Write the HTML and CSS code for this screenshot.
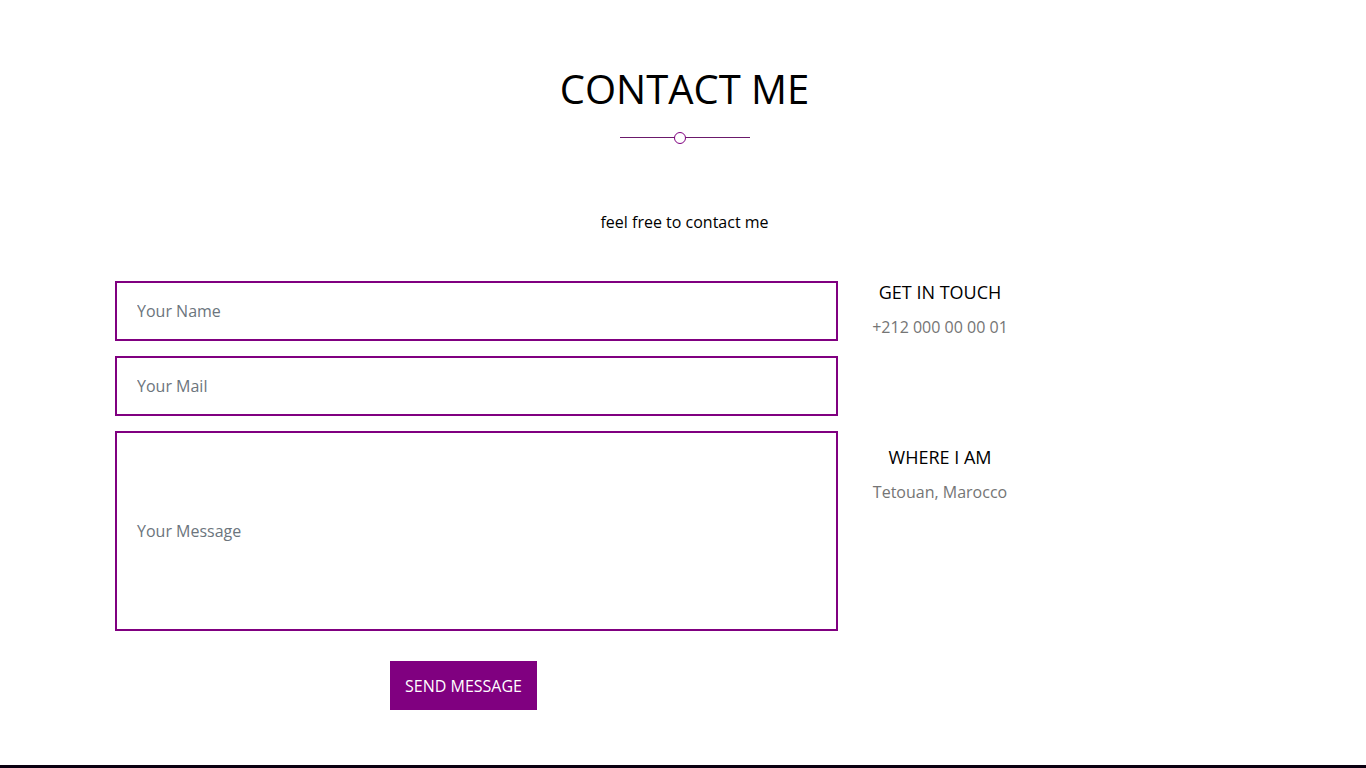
FILE: index.html
```html
<!DOCTYPE html>
<html lang="en">
<head>
<meta charset="utf-8">
<title>Contact Me</title>
<link rel="stylesheet" href="styles.css">
</head>
<body>
<section class="contact">
  <h2 class="contact-title">CONTACT ME</h2>
  <div class="divider"><span class="divider-dot"></span></div>
  <p class="contact-lead">feel free to contact me</p>
  <div class="contact-row">
    <form class="contact-form">
      <input class="field" type="text" placeholder="Your Name">
      <input class="field" type="email" placeholder="Your Mail">
      <textarea class="field field-message" placeholder="Your Message"></textarea>
      <button class="send-btn" type="button">SEND MESSAGE</button>
    </form>
    <div class="contact-info">
      <div class="info-block">
        <h3 class="info-title">GET IN TOUCH</h3>
        <p class="info-text">+212 000 00 00 01</p>
      </div>
      <div class="info-block">
        <h3 class="info-title">WHERE I AM</h3>
        <p class="info-text">Tetouan, Marocco</p>
      </div>
    </div>
  </div>
</section>
<footer class="footer"></footer>
</body>
</html>
```

FILE: styles.css
```css
html {
  overflow-y: scroll;
}

html::-webkit-scrollbar {
  width: 17px;
  background: #f1f1f1;
}

html::-webkit-scrollbar-thumb {
  background: #c1c1c1;
}

body {
  margin: 0;
  font-family: "Open Sans", "Noto Sans", sans-serif;
  color: #000;
  background: #fff;
}

.contact {
  width: 1139px;
  padding: 64px 0 55px 115px;
  text-align: center;
}

.contact-title {
  margin: 0;
  font-size: 40px;
  line-height: 50px;
  font-weight: 400;
}

.divider {
  position: relative;
  width: 130px;
  height: 12px;
  margin: 18px auto 0;
}

.divider::before {
  content: "";
  display: block;
  position: relative;
  top: 5px;
  height: 1px;
  background: #6b1a6b;
}

.divider-dot {
  position: absolute;
  left: 54px;
  top: 0;
  width: 10px;
  height: 10px;
  border: 1px solid #800080;
  border-radius: 50%;
  background: #fff;
}

.contact-lead {
  margin: 67px 0 0;
  font-size: 16px;
  line-height: 22px;
}

.contact-row {
  display: flex;
  gap: 22px;
  margin-top: 48px;
  text-align: left;
}

.contact-form {
  display: flex;
  flex-direction: column;
  gap: 15px;
  width: 723px;
}

.field {
  box-sizing: border-box;
  width: 100%;
  height: 60px;
  margin: 0;
  padding: 0 20px;
  border: 2px solid #800080;
  border-radius: 0;
  outline: none;
  font-family: inherit;
  font-size: 16px;
  line-height: 22px;
  color: #333;
  background: #fff;
}

.field::placeholder {
  color: #6c757d;
  opacity: 1;
}

.field-message {
  display: block;
  height: 200px;
  padding-top: 87px;
  resize: none;
}

.send-btn {
  align-self: flex-start;
  width: 147px;
  height: 49px;
  margin: 15px 0 0 275px;
  padding: 0;
  border: none;
  background: #800080;
  color: #fff;
  font-family: inherit;
  font-size: 16px;
  line-height: 22px;
}

.contact-info {
  display: flex;
  flex-direction: column;
  gap: 110px;
  width: 160px;
  padding-top: 2px;
  text-align: center;
}

.info-title {
  margin: 0;
  font-size: 18px;
  line-height: 18px;
  font-weight: 400;
}

.info-text {
  margin: 15px 0 0;
  font-size: 16px;
  line-height: 22px;
  color: #757575;
}

.footer {
  height: 3px;
  background: #0b0010;
}
```
